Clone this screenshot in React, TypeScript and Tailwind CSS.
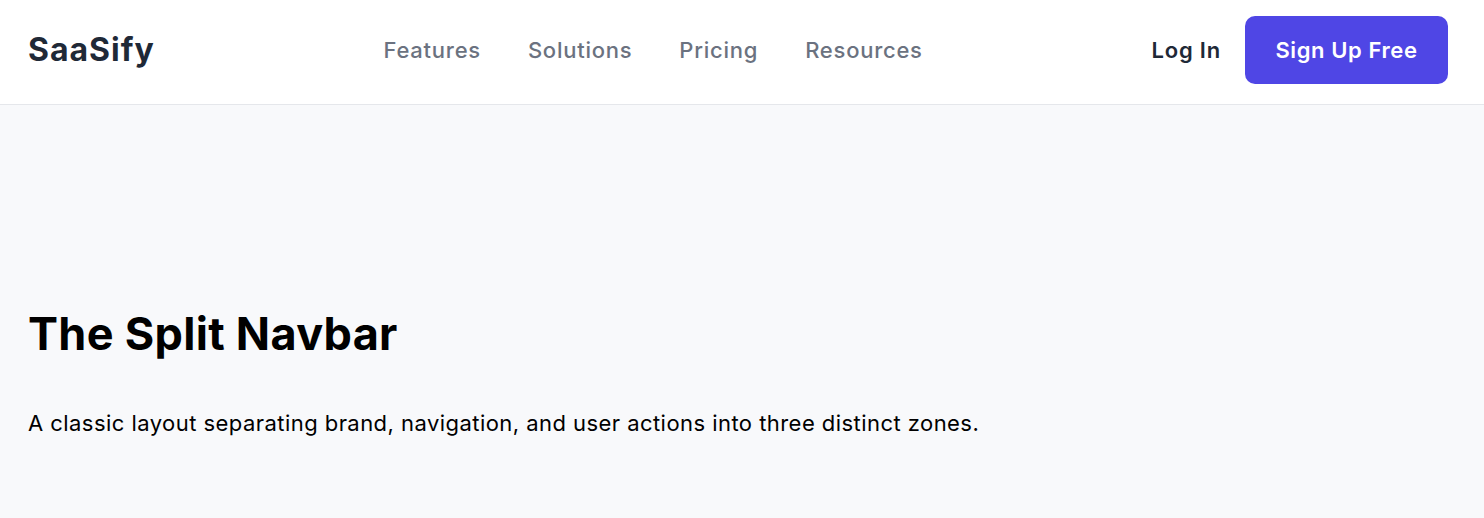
export default function App() {
  return (
    <div className="min-h-[518px] bg-[#f8f9fb] font-['Inter',sans-serif]">
      <header className="flex h-[105px] items-center justify-between border-b border-[#e5e7eb] bg-white pb-[4px] pl-[28px] pr-[36px]">
        <div className="text-[32px] font-bold tracking-[1px] text-[#1f2937]">SaaSify</div>
        <nav className="flex items-center gap-[47px] text-[22px] font-medium tracking-[0.75px] text-[#6b7280]">
          <a href="#">Features</a>
          <a href="#">Solutions</a>
          <a href="#">Pricing</a>
          <a href="#">Resources</a>
        </nav>
        <div className="flex items-center gap-[24px]">
          <a href="#" className="text-[22px] font-semibold tracking-[0.8px] text-[#1f2937]">Log In</a>
          <button className="flex h-[68px] w-[203px] items-center justify-center rounded-[10px] bg-[#4f46e5] text-[22px] font-semibold tracking-[0.6px] text-white">
            Sign Up Free
          </button>
        </div>
      </header>
      <main className="pl-[28px] pt-[202px]">
        <h1 className="text-[45px] font-bold leading-[54px] tracking-[0.3px] text-black">The Split Navbar</h1>
        <p className="mt-[46px] text-[22px] leading-[32px] tracking-[0.45px] text-black">
          A classic layout separating brand, navigation, and user actions into three distinct zones.
        </p>
      </main>
    </div>
  );
}
